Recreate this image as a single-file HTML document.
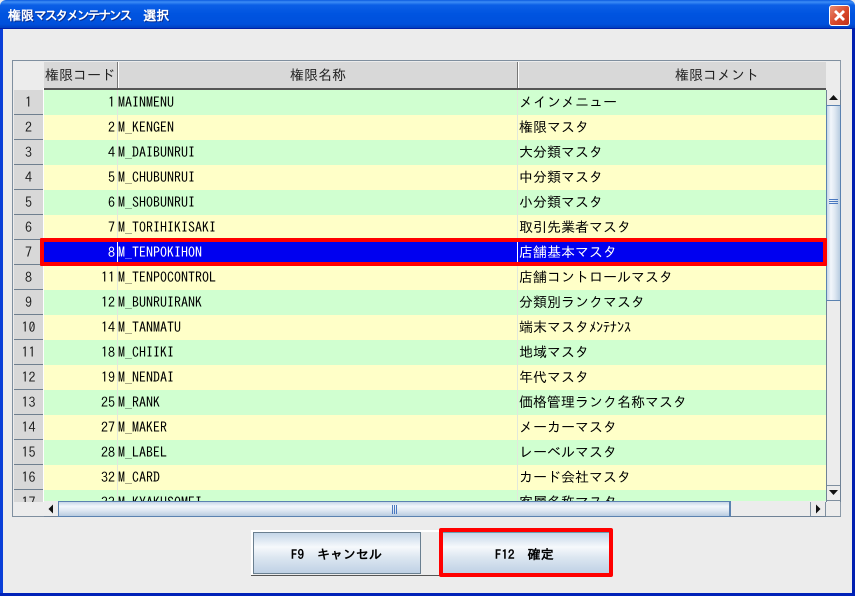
<!DOCTYPE html>
<html><head><meta charset="utf-8">
<style>
html,body{margin:0;padding:0;background:#ececec}
#w{position:relative;width:855px;height:596px;overflow:hidden;background:#ececec;font-family:"Liberation Sans","IPAGothic",monospace}
#w div{position:absolute;box-sizing:border-box}
.t{font-family:"IPAGothic",monospace;font-size:14px;line-height:25px;color:#000;white-space:pre}
.k{letter-spacing:-2.300px}
</style></head><body><div id="w">
<div style="left:0;top:0;width:855px;height:29px;background:linear-gradient(#0a5ae0 0,#3c8cf6 2px,#0b5fe6 5px,#0054e0 14px,#0050dc 24px,#003fc0 28px);border-radius:6px 6px 0 0"></div>
<div style="left:0;top:28px;width:3px;height:568px;background:#0a3fd8"></div>
<div style="left:852px;top:28px;width:3px;height:568px;background:#001fb0"></div>
<div style="left:0;top:593px;width:855px;height:3px;background:#0022b8"></div>
<div style="left:0;top:28px;width:855px;height:1px;background:#0020a8"></div>
<div style="left:8px;top:8px;font:bold 13px/16px 'IPAGothic',monospace;color:#fff;text-shadow:1px 1px 0 #0a2f90;white-space:pre">権限<span class="k">マスタメンテナンス</span>　選択</div>
<div style="left:829px;top:5px;width:21px;height:21px;background:linear-gradient(135deg,#e88a70,#d8482a 55%,#c0301a);border:1px solid #fff;border-radius:3px"></div>
<svg style="position:absolute;left:829px;top:5px" width="21" height="21"><path d="M6 6L15 15M15 6L6 15" stroke="#fff" stroke-width="2.800"/></svg>

<div style="left:12px;top:60px;width:829px;height:457px;border:1px solid #7f8f9f;border-right-color:#8c9aa8;background:#ececec"></div>
<div style="left:44px;top:62px;width:782px;height:27px;background:#d8d8d8"></div>
<div style="left:44px;top:88px;width:782px;height:2px;background:#555"></div>
<div style="left:43px;top:88px;width:1px;height:414px;background:#fff"></div>
<div style="left:117px;top:62px;width:1px;height:26px;background:#777"></div>
<div style="left:118px;top:62px;width:1px;height:26px;background:#fff"></div>
<div style="left:517px;top:62px;width:1px;height:26px;background:#777"></div>
<div style="left:518px;top:62px;width:1px;height:26px;background:#fff"></div>
<div class="t" style="left:45px;top:63px;color:#222">権限コード</div>
<div class="t" style="left:290px;top:63px;color:#222">権限名称</div>
<div class="t" style="left:675px;top:63px;color:#222">権限コメント</div>

<!-- row -->
<div style="left:14px;top:90px;width:29px;height:412px;overflow:hidden;background:#d8d8d8" id="h">
<div class="t" style="left:0;top:0;width:29px;height:25px;text-align:center;border-bottom:1px solid #6f7f8f;color:#222">1</div>
<div class="t" style="left:0;top:25px;width:29px;height:25px;text-align:center;border-bottom:1px solid #6f7f8f;color:#222">2</div>
<div class="t" style="left:0;top:50px;width:29px;height:25px;text-align:center;border-bottom:1px solid #6f7f8f;color:#222">3</div>
<div class="t" style="left:0;top:75px;width:29px;height:25px;text-align:center;border-bottom:1px solid #6f7f8f;color:#222">4</div>
<div class="t" style="left:0;top:100px;width:29px;height:25px;text-align:center;border-bottom:1px solid #6f7f8f;color:#222">5</div>
<div class="t" style="left:0;top:125px;width:29px;height:25px;text-align:center;border-bottom:1px solid #6f7f8f;color:#222">6</div>
<div class="t" style="left:0;top:150px;width:29px;height:25px;text-align:center;border-bottom:1px solid #6f7f8f;color:#222">7</div>
<div class="t" style="left:0;top:175px;width:29px;height:25px;text-align:center;border-bottom:1px solid #6f7f8f;color:#222">8</div>
<div class="t" style="left:0;top:200px;width:29px;height:25px;text-align:center;border-bottom:1px solid #6f7f8f;color:#222">9</div>
<div class="t" style="left:0;top:225px;width:29px;height:25px;text-align:center;border-bottom:1px solid #6f7f8f;color:#222">10</div>
<div class="t" style="left:0;top:250px;width:29px;height:25px;text-align:center;border-bottom:1px solid #6f7f8f;color:#222">11</div>
<div class="t" style="left:0;top:275px;width:29px;height:25px;text-align:center;border-bottom:1px solid #6f7f8f;color:#222">12</div>
<div class="t" style="left:0;top:300px;width:29px;height:25px;text-align:center;border-bottom:1px solid #6f7f8f;color:#222">13</div>
<div class="t" style="left:0;top:325px;width:29px;height:25px;text-align:center;border-bottom:1px solid #6f7f8f;color:#222">14</div>
<div class="t" style="left:0;top:350px;width:29px;height:25px;text-align:center;border-bottom:1px solid #6f7f8f;color:#222">15</div>
<div class="t" style="left:0;top:375px;width:29px;height:25px;text-align:center;border-bottom:1px solid #6f7f8f;color:#222">16</div>
<div class="t" style="left:0;top:400px;width:29px;height:25px;text-align:center;color:#222">17</div>
</div>

<div style="left:44px;top:90px;width:782px;height:411px;overflow:hidden;background:#ffffc8">
<div style="left:0;top:0;width:782px;height:25px;background:#d0ffd0"></div>
<div style="left:0;top:50px;width:782px;height:25px;background:#d0ffd0"></div>
<div style="left:0;top:100px;width:782px;height:25px;background:#d0ffd0"></div>
<div style="left:0;top:150px;width:782px;height:25px;background:#0000f0"></div>
<div style="left:0;top:200px;width:782px;height:25px;background:#d0ffd0"></div>
<div style="left:0;top:250px;width:782px;height:25px;background:#d0ffd0"></div>
<div style="left:0;top:300px;width:782px;height:25px;background:#d0ffd0"></div>
<div style="left:0;top:350px;width:782px;height:25px;background:#d0ffd0"></div>
<div style="left:0;top:400px;width:782px;height:25px;background:#d0ffd0"></div>
<div style="left:73px;top:0;width:1px;height:411px;background:#e2e8dc"></div>
<div style="left:473px;top:0;width:1px;height:411px;background:#e2e8dc"></div>
<div style="left:73px;top:150px;width:1px;height:25px;background:#fff"></div>
<div style="left:473px;top:150px;width:1px;height:25px;background:#fff"></div>

<div class="t" style="right:711px;top:0">1</div><div class="t" style="left:74px;top:0">MAINMENU</div><div class="t" style="left:475px;top:0">メインメニュー</div>
<div class="t" style="right:711px;top:25px">2</div><div class="t" style="left:74px;top:25px">M_KENGEN</div><div class="t" style="left:475px;top:25px">権限マスタ</div>
<div class="t" style="right:711px;top:50px">4</div><div class="t" style="left:74px;top:50px">M_DAIBUNRUI</div><div class="t" style="left:475px;top:50px">大分類マスタ</div>
<div class="t" style="right:711px;top:75px">5</div><div class="t" style="left:74px;top:75px">M_CHUBUNRUI</div><div class="t" style="left:475px;top:75px">中分類マスタ</div>
<div class="t" style="right:711px;top:100px">6</div><div class="t" style="left:74px;top:100px">M_SHOBUNRUI</div><div class="t" style="left:475px;top:100px">小分類マスタ</div>
<div class="t" style="right:711px;top:125px">7</div><div class="t" style="left:74px;top:125px">M_TORIHIKISAKI</div><div class="t" style="left:475px;top:125px">取引先業者マスタ</div>
<div class="t" style="right:711px;top:150px;color:#fff">8</div><div class="t" style="left:74px;top:150px;color:#fff">M_TENPOKIHON</div><div class="t" style="left:475px;top:150px;color:#fff">店舗基本マスタ</div>
<div class="t" style="right:711px;top:175px">11</div><div class="t" style="left:74px;top:175px">M_TENPOCONTROL</div><div class="t" style="left:475px;top:175px">店舗コントロールマスタ</div>
<div class="t" style="right:711px;top:200px">12</div><div class="t" style="left:74px;top:200px">M_BUNRUIRANK</div><div class="t" style="left:475px;top:200px">分類別ランクマスタ</div>
<div class="t" style="right:711px;top:225px">14</div><div class="t" style="left:74px;top:225px">M_TANMATU</div><div class="t" style="left:475px;top:225px">端末マスタﾒﾝﾃﾅﾝｽ</div>
<div class="t" style="right:711px;top:250px">18</div><div class="t" style="left:74px;top:250px">M_CHIIKI</div><div class="t" style="left:475px;top:250px">地域マスタ</div>
<div class="t" style="right:711px;top:275px">19</div><div class="t" style="left:74px;top:275px">M_NENDAI</div><div class="t" style="left:475px;top:275px">年代マスタ</div>
<div class="t" style="right:711px;top:300px">25</div><div class="t" style="left:74px;top:300px">M_RANK</div><div class="t" style="left:475px;top:300px">価格管理ランク名称マスタ</div>
<div class="t" style="right:711px;top:325px">27</div><div class="t" style="left:74px;top:325px">M_MAKER</div><div class="t" style="left:475px;top:325px">メーカーマスタ</div>
<div class="t" style="right:711px;top:350px">28</div><div class="t" style="left:74px;top:350px">M_LABEL</div><div class="t" style="left:475px;top:350px">レーベルマスタ</div>
<div class="t" style="right:711px;top:375px">32</div><div class="t" style="left:74px;top:375px">M_CARD</div><div class="t" style="left:475px;top:375px">カード会社マスタ</div>
<div class="t" style="right:711px;top:400px">33</div><div class="t" style="left:74px;top:400px">M_KYAKUSOMEI</div><div class="t" style="left:475px;top:400px">客層名称マスタ</div>
</div>

<!-- vertical scrollbar -->
<div style="left:826px;top:90px;width:15px;height:412px;background:#ececec;border-left:1px solid #6f8296;border-right:1px solid #6f8296"></div>
<div style="left:826px;top:105px;width:15px;height:196px;background:linear-gradient(90deg,#c6d6e8,#f2f6fb 30%,#dfe8f2 60%,#b8cce0);border:1px solid #5b82b0"></div>
<div style="left:829px;top:199px;width:9px;height:1px;background:#4a78c0"></div>
<div style="left:829px;top:201px;width:9px;height:1px;background:#4a78c0"></div>
<div style="left:829px;top:203px;width:9px;height:1px;background:#4a78c0"></div>
<div style="left:827px;top:485px;width:13px;height:1px;background:#7f8f9f"></div>
<div style="left:827px;top:500px;width:13px;height:1px;background:#7f8f9f"></div>
<svg style="position:absolute;left:827px;top:90px" width="13" height="15"><path d="M2 10H11L6.500 5Z" fill="#111"/></svg>
<svg style="position:absolute;left:827px;top:486px" width="13" height="14"><path d="M2 4H11L6.500 9Z" fill="#111"/></svg>

<div style="left:40px;top:238px;width:787px;height:28px;border:4px solid #f00;border-radius:1px"></div>

<!-- horizontal scrollbar -->
<div style="left:44px;top:501px;width:782px;height:16px;background:#ececec;border-bottom:1px solid #6f8296"></div>
<div style="left:58px;top:501px;width:673px;height:16px;background:linear-gradient(#c6d6e8,#f2f6fb 30%,#dfe8f2 60%,#b8cce0);border:1px solid #5b82b0;border-width:1px 2px 1px 1px"></div>
<div style="left:392px;top:505px;width:1px;height:9px;background:#4a78c0"></div>
<div style="left:394px;top:505px;width:1px;height:9px;background:#4a78c0"></div>
<div style="left:396px;top:505px;width:1px;height:9px;background:#4a78c0"></div>
<div style="left:810px;top:502px;width:1px;height:14px;background:#7f8f9f"></div>
<div style="left:825px;top:502px;width:1px;height:14px;background:#7f8f9f"></div>
<svg style="position:absolute;left:44px;top:502px" width="14" height="14"><path d="M9 2.500V11.500L4.500 7Z" fill="#111"/></svg>
<svg style="position:absolute;left:811px;top:502px" width="14" height="14"><path d="M5 2.500V11.500L9.500 7Z" fill="#111"/></svg>

<!-- buttons -->
<div style="left:251px;top:530px;width:190px;height:2px;background:#fff"></div>
<div style="left:251px;top:530px;width:2px;height:45px;background:#fff"></div>
<div style="left:251px;top:575px;width:190px;height:1px;background:#555"></div>
<div style="left:253px;top:532px;width:168px;height:42px;background:linear-gradient(#c4d6e8,#f6f9fc 35%,#dde7f1 60%,#bfd1e5);border:1px solid #6a7f90"></div>
<div style="left:291px;top:547px;font:bold 13px/15px 'IPAGothic',monospace;color:#000;white-space:pre">F9　キャンセル</div>
<div style="left:442px;top:532px;width:168px;height:42px;background:linear-gradient(#c4d6e8,#f6f9fc 35%,#dde7f1 60%,#bfd1e5);border:1px solid #6a9fb0"></div>
<div style="left:495px;top:547px;font:bold 13px/15px 'IPAGothic',monospace;color:#000;white-space:pre">F12　確定</div>
<div style="left:439px;top:528px;width:174px;height:49px;border:4px solid #f00;border-radius:2px"></div>
</div></body></html>
